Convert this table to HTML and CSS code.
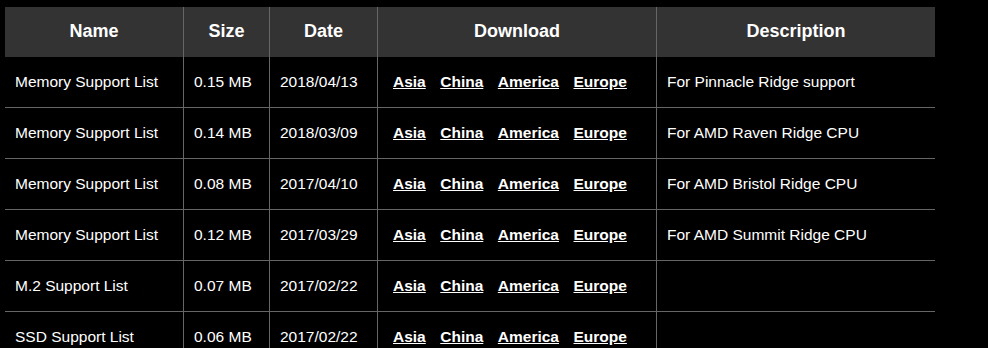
FILE: index.html
```html
<!DOCTYPE html>
<html>
<head>
<meta charset="utf-8">
<link rel="stylesheet" href="styles.css">
</head>
<body>
<div class="wrap">
<table class="list">
  <colgroup>
    <col class="c-name"><col class="c-size"><col class="c-date"><col class="c-dl"><col class="c-desc">
  </colgroup>
  <thead>
    <tr><th>Name</th><th>Size</th><th>Date</th><th>Download</th><th>Description</th></tr>
  </thead>
  <tbody>
    <tr><td>Memory Support List</td><td>0.15 MB</td><td>2018/04/13</td><td class="dl"><a href="#">Asia</a><a href="#">China</a><a href="#">America</a><a href="#">Europe</a></td><td>For Pinnacle Ridge support</td></tr>
    <tr><td>Memory Support List</td><td>0.14 MB</td><td>2018/03/09</td><td class="dl"><a href="#">Asia</a><a href="#">China</a><a href="#">America</a><a href="#">Europe</a></td><td>For AMD Raven Ridge CPU</td></tr>
    <tr><td>Memory Support List</td><td>0.08 MB</td><td>2017/04/10</td><td class="dl"><a href="#">Asia</a><a href="#">China</a><a href="#">America</a><a href="#">Europe</a></td><td>For AMD Bristol Ridge CPU</td></tr>
    <tr><td>Memory Support List</td><td>0.12 MB</td><td>2017/03/29</td><td class="dl"><a href="#">Asia</a><a href="#">China</a><a href="#">America</a><a href="#">Europe</a></td><td>For AMD Summit Ridge CPU</td></tr>
    <tr><td>M.2 Support List</td><td>0.07 MB</td><td>2017/02/22</td><td class="dl"><a href="#">Asia</a><a href="#">China</a><a href="#">America</a><a href="#">Europe</a></td><td></td></tr>
    <tr><td>SSD Support List</td><td>0.06 MB</td><td>2017/02/22</td><td class="dl"><a href="#">Asia</a><a href="#">China</a><a href="#">America</a><a href="#">Europe</a></td><td></td></tr>
  </tbody>
</table>
</div>
</body>
</html>
```

FILE: styles.css
```css
html, body {
  margin: 0;
  background: #000;
  color: #fff;
  font-family: "Liberation Sans", Arial, sans-serif;
}
.wrap {
  padding: 7px 0 0 5px;
}
.list {
  width: 930px;
  table-layout: fixed;
  border-collapse: separate;
  border-spacing: 0;
}
.c-name { width: 178px; }
.c-size { width: 86px; }
.c-date { width: 108px; }
.c-dl { width: 279px; }
.c-desc { width: 279px; }
.list th, .list td {
  box-sizing: border-box;
  white-space: nowrap;
  overflow: hidden;
}
.list th {
  height: 50px;
  background: #333;
  font-size: 18px;
  font-weight: bold;
  text-align: center;
  padding: 0 0 2px;
}
.list th + th, .list td + td {
  border-left: 1px solid #666;
}
.list td {
  height: 51px;
  font-size: 15.5px;
  text-align: left;
  padding: 0 0 0 10px;
  border-bottom: 1px solid #666;
  vertical-align: middle;
}
.list td.dl {
  padding-left: 15px;
}
.dl a {
  color: #fff;
  font-weight: bold;
  text-decoration: underline;
  margin-right: 14.5px;
}
```
